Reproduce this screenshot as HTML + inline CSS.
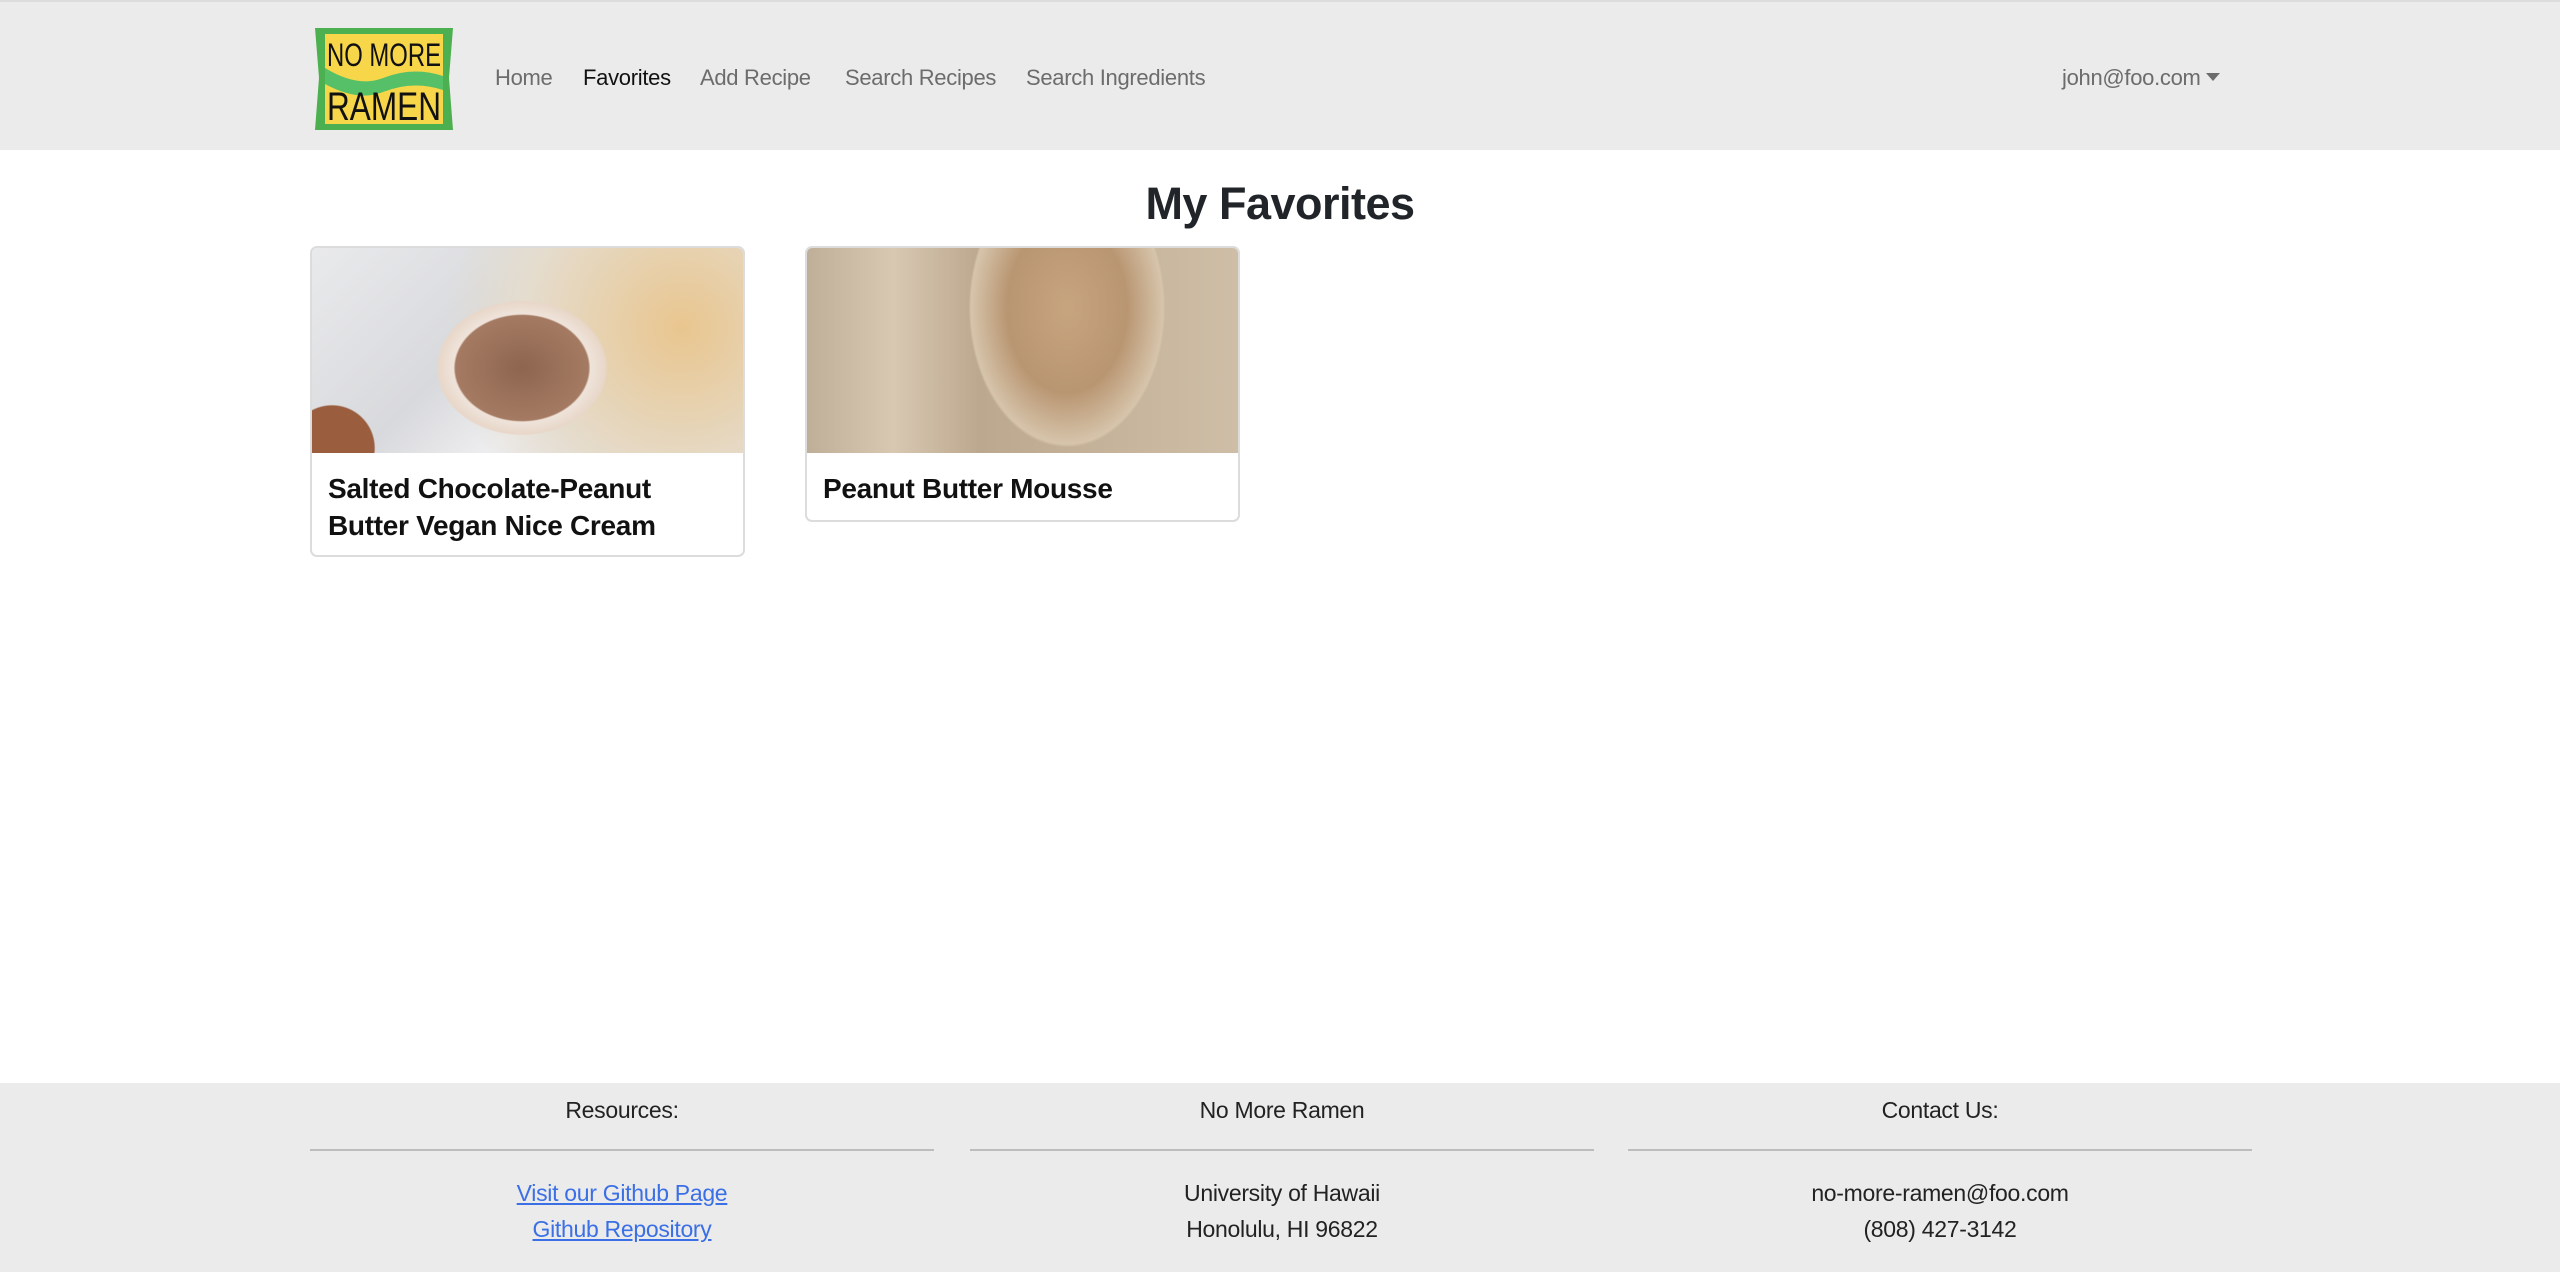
<!DOCTYPE html>
<html><head><meta charset="utf-8"><style>
*{box-sizing:border-box;margin:0;padding:0}
body{width:2560px;height:1272px;position:relative;background:#fff;font-family:"Liberation Sans",sans-serif;color:#212529;overflow:hidden}
.nav{position:absolute;left:0;top:0;width:2560px;height:150px;background:#ebebeb;border-top:2px solid #dcdcdc}
.nav a{position:absolute;top:63px;font-size:22px;letter-spacing:-0.3px;color:#6c6c6c;text-decoration:none;white-space:nowrap}
.logo{position:absolute;left:313px;top:24px;width:142px;height:105px}
h2{position:absolute;left:0;width:2560px;top:178px;text-align:center;font-size:45px;font-weight:600;letter-spacing:-0.5px}
.card{position:absolute;top:246px;width:435px;border:2px solid #dcdcdc;border-radius:7px;overflow:hidden;background:#fff}
.img{height:205px}
.card h5{font-size:28px;font-weight:600;line-height:37px;padding:17px 16px 16px;color:#111;letter-spacing:-0.3px}
.foot{position:absolute;left:0;top:1083px;width:2560px;height:189px;background:#ebebeb}
.col{position:absolute;top:0;width:624px;text-align:center;font-size:23px;letter-spacing:-0.3px;color:#222}
.col .h{position:absolute;top:14px;width:100%}
.col hr{position:absolute;top:66px;left:0;width:100%;border:0;border-top:2px solid #bdbdbd}
.col .l1{position:absolute;top:97px;width:100%}
.col .l2{position:absolute;top:133px;width:100%}
.col a{color:#3b6fe6;text-decoration:underline}
</style></head><body>
<div class="nav">
<svg class="logo" viewBox="0 0 142 105">
<path d="M2 2 L140 2 L136 52 L140 104 L2 104 L6 52 Z" fill="#4cb050"/>
<rect x="12" y="8" width="118" height="90" fill="#f8d649"/>
<path d="M12 42 Q45 62 70 52 Q100 40 130 50 L130 64 Q100 54 70 66 Q45 76 12 58 Z" fill="#56c068"/>
<text x="14" y="40" textLength="114" lengthAdjust="spacingAndGlyphs" font-family="Liberation Sans Narrow, Liberation Sans, sans-serif" font-size="32" fill="#111">NO MORE</text>
<text x="14" y="94" textLength="114" lengthAdjust="spacingAndGlyphs" font-family="Liberation Sans Narrow, Liberation Sans, sans-serif" font-size="40" fill="#111">RAMEN</text>
</svg>
<a style="left:495px">Home</a>
<a style="left:583px;color:#111">Favorites</a>
<a style="left:700px">Add Recipe</a>
<a style="left:845px">Search Recipes</a>
<a style="left:1026px">Search Ingredients</a>
<a style="left:2062px">john@foo.com <span style="display:inline-block;border-left:7px solid transparent;border-right:7px solid transparent;border-top:8px solid #6c6c6c;vertical-align:4px"></span></a>
</div>
<h2>My Favorites</h2>
<div class="card" style="left:310px;height:311px">
<div class="img" style="background:radial-gradient(ellipse 95px 75px at 210px 120px,#8d6650 0,#a57a62 70%,#efe3da 72%,#e8d7c9 88%,transparent 90%),radial-gradient(circle 70px at 20px 200px,#9a5e3e 60%,transparent 62%),radial-gradient(circle at 370px 80px,#e9c68f 0,#e5dccd 40%,transparent 60%),linear-gradient(135deg,#e9eaec,#d8d9dc 40%,#eeeef0 60%,#d5d7db)"></div>
<h5>Salted Chocolate-Peanut Butter Vegan Nice Cream</h5>
</div>
<div class="card" style="left:805px;height:276px">
<div class="img" style="background:radial-gradient(ellipse 120px 170px at 260px 60px,#c7a57f 0,#b99672 50%,#d6c4ab 80%,transparent 82%),linear-gradient(90deg,#bfae98,#d8c8b2 20%,#bca88e 40%,#cfbea7 100%)"></div>
<h5>Peanut Butter Mousse</h5>
</div>
<div class="foot">
<div class="col" style="left:310px"><div class="h">Resources:</div><hr><div class="l1"><a>Visit our Github Page</a></div><div class="l2"><a>Github Repository</a></div></div>
<div class="col" style="left:970px"><div class="h">No More Ramen</div><hr><div class="l1">University of Hawaii</div><div class="l2">Honolulu, HI 96822</div></div>
<div class="col" style="left:1628px"><div class="h">Contact Us:</div><hr><div class="l1">no-more-ramen@foo.com</div><div class="l2">(808) 427-3142</div></div>
</div>
</body></html>
